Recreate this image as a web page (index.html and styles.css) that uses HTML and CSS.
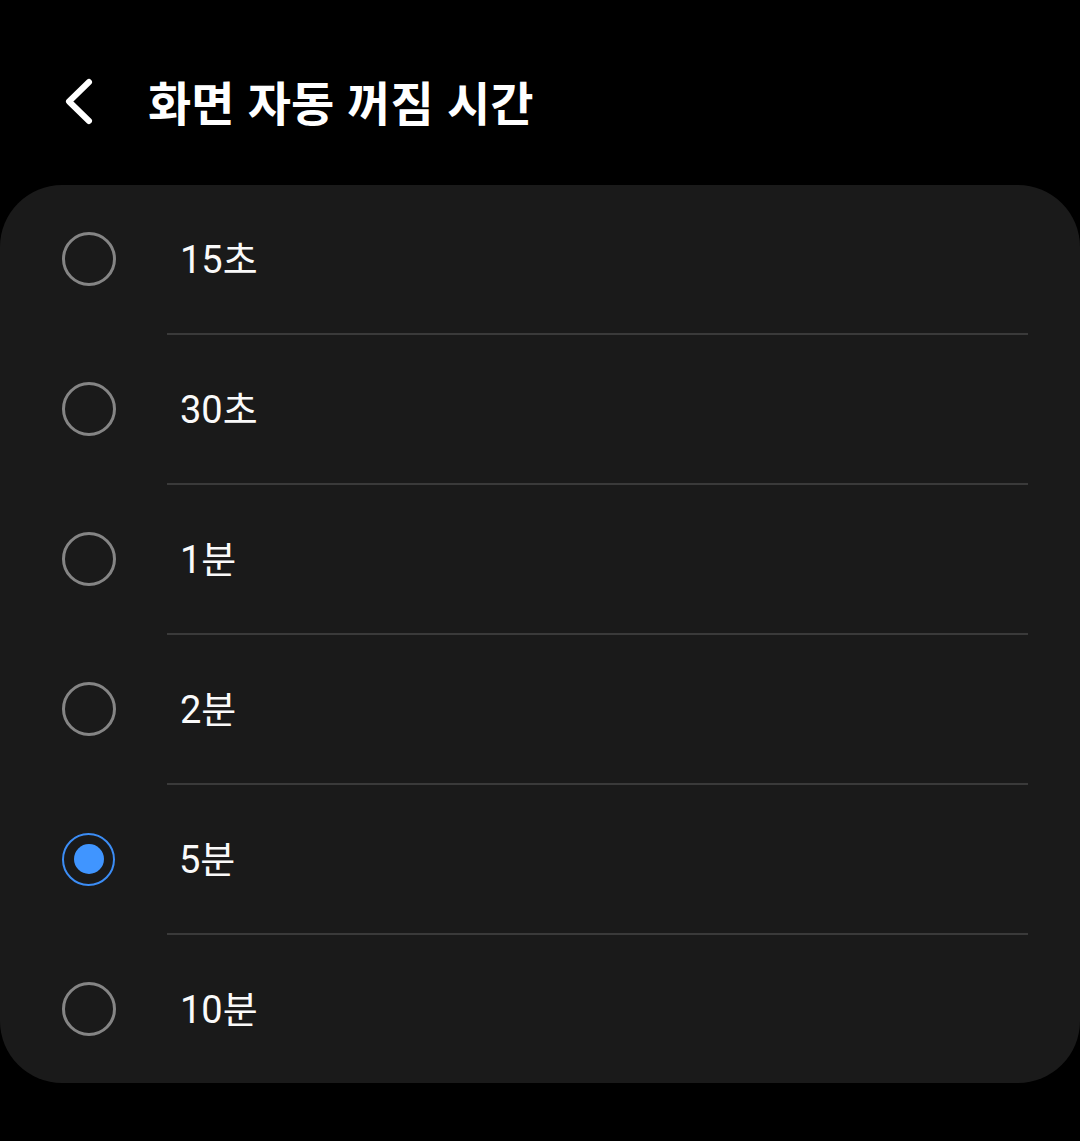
FILE: index.html
```html
<!DOCTYPE html>
<html lang="ko">
<head>
<meta charset="utf-8">
<title>화면 자동 꺼짐 시간</title>
<link rel="stylesheet" href="styles.css">
</head>
<body>
<header class="topbar">
  <button class="back" aria-label="뒤로">
    <svg width="40" height="52" viewBox="0 0 40 52"><path d="M32 7 L12 26.5 L32 46" fill="none" stroke="#fff" stroke-width="6" stroke-linecap="round" stroke-linejoin="round"/></svg>
  </button>
  <h1 class="title">화면 자동 꺼짐 시간</h1>
</header>
<main class="card">
  <div class="row"><span class="radio"></span><span class="label">15초</span></div>
  <div class="divider"></div>
  <div class="row"><span class="radio"></span><span class="label">30초</span></div>
  <div class="divider"></div>
  <div class="row"><span class="radio"></span><span class="label">1분</span></div>
  <div class="divider"></div>
  <div class="row"><span class="radio"></span><span class="label">2분</span></div>
  <div class="divider"></div>
  <div class="row"><span class="radio checked"></span><span class="label">5분</span></div>
  <div class="divider"></div>
  <div class="row"><span class="radio"></span><span class="label">10분</span></div>
</main>
</body>
</html>
```
FILE: styles.css
```css
html, body {
  margin: 0;
  padding: 0;
  background: #000;
  color: #fff;
  font-family: Roboto, "Noto Sans CJK KR", sans-serif;
}
body {
  width: 1080px;
  height: 1141px;
  overflow: hidden;
}
.topbar {
  height: 185px;
  display: flex;
  align-items: center;
  box-sizing: border-box;
  padding-left: 57px;
  padding-top: 16px;
}
.back {
  background: none;
  border: 0;
  padding: 0;
  width: 40px;
  height: 52px;
  display: flex;
  align-items: center;
  justify-content: center;
}
.title {
  margin: 0 0 0 51px;
  font-family: "Noto Sans CJK KR", sans-serif;
  font-weight: 700;
  font-size: 47px;
  letter-spacing: 0;
  line-height: 1;
}
.card {
  background: #1a1a1a;
  border-radius: 62px;
  display: flex;
  flex-direction: column;
}
.row {
  height: 148px;
  display: flex;
  align-items: center;
  padding-left: 62px;
}
.radio {
  width: 48px;
  height: 48px;
  border: 3px solid #858585;
  border-radius: 50%;
  display: flex;
  align-items: center;
  justify-content: center;
  flex: none;
}
.radio.checked {
  border-color: #3c8df5;
  border-width: 2.5px;
  width: 49px;
  height: 49px;
}
.radio.checked::after {
  content: "";
  width: 30px;
  height: 30px;
  border-radius: 50%;
  background: #4095ff;
}
.label {
  margin-left: 64px;
  font-size: 38px;
  line-height: 1;
  color: #fafafa;
  padding-top: 2px;
}
.divider {
  height: 2px;
  background: #3a3a3a;
  margin: 0 52px 0 167px;
}
```
